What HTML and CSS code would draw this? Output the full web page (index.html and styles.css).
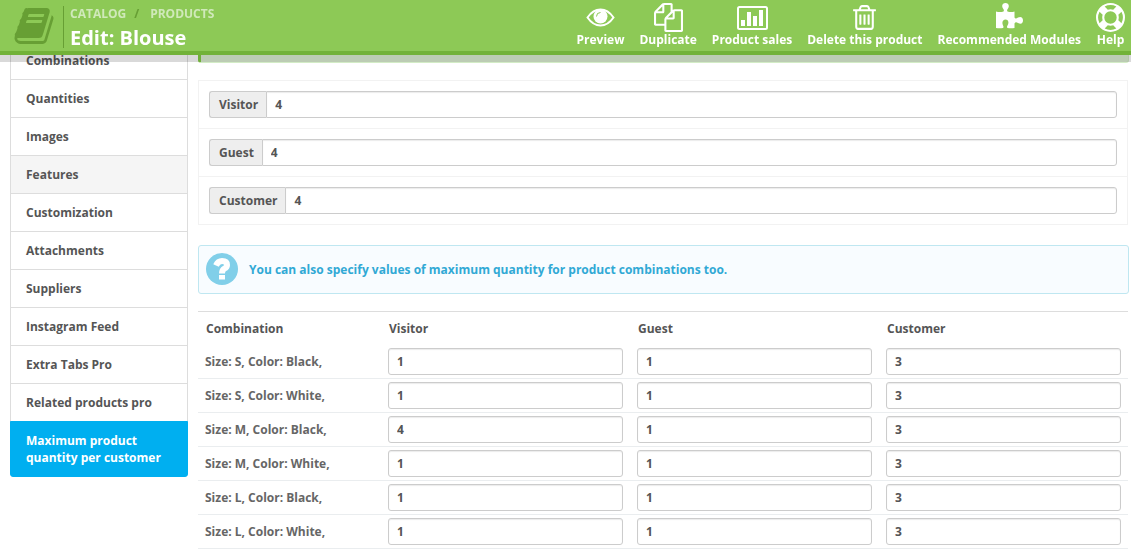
FILE: index.html
```
<!DOCTYPE html>
<html lang="en">
<head>
    <meta charset="UTF-8">
    <meta name="viewport" content="width=device-width, initial-scale=1.0">
    <title>Edit: Blouse</title>
    <link rel="stylesheet" href="styles.css">
</head>
<body>
    <header class="page-head">
        <svg class="page-icon" viewBox="0 0 1792 1792" aria-hidden="true"><path d="M1703 478q40 57 18 129l-275 906q-19 64-76.500 107.500t-122.500 43.500h-923q-77 0-148.500-53.500t-99.500-131.500q-24-67-2-127 0-4 3-27t4-37q1-8-3-21.500t-3-19.500q2-11 8-21t16.500-23.500 16.500-23.500q23-38 45-91.500t30-91.500q3-10 .5-30t-.5-28q3-11 17-28t17-23q21-36 42-92t25-90q1-9-2.500-32t.5-28q4-13 22-30.500t22-22.500q19-26 42.500-84.500t27.500-96.500q1-8-3-25.500t-2-26.500q2-8 9-18t18-23 17-21q8-12 16.500-30.500t15-35 16-36 19.500-32 26.500-23.500 36-11.500 47.500 5.500l-1 3q38-9 51-9h761q74 0 114 56t18 130l-274 906q-36 119-71.500 153.500t-128.500 34.500h-869q-27 0-38 15-11 16-1 43 24 70 144 70h923q29 0 56-15.500t35-41.500l300-987q7-22 5-57 38 15 59 43zm-1064 2q-4 13 2 22.500t20 9.500h608q13 0 25.500-9.500t16.500-22.500l21-64q4-13-2-22.500t-20-9.500h-608q-13 0-25.500 9.500t-16.500 22.500zm-83 256q-4 13 2 22.500t20 9.500h608q13 0 25.500-9.500t16.500-22.500l21-64q4-13-2-22.500t-20-9.500h-608q-13 0-25.500 9.500t-16.500 22.500z"/></svg>
        <div class="page-heading">
            <nav class="breadcrumb" aria-label="Breadcrumb">
                <a href="#">CATALOG</a>
                <span class="separator">/</span>
                <a href="#">PRODUCTS</a>
            </nav>
            <h1>Edit: Blouse</h1>
        </div>
        <nav class="toolbar" aria-label="Actions">
            <a href="#">
                <svg viewBox="0 0 29 29" aria-hidden="true"><path class="line" d="M1.500 14.500Q7 6.500 14.500 6.500T27.500 14.500Q22 22.500 14.500 22.500T1.500 14.500z"/><circle cx="14.500" cy="13.500" r="7"/><path class="cut" d="M10.500 13.500q0-4 4-4"/></svg>
                <span>Preview</span>
            </a>
            <a href="#">
                <svg viewBox="0 0 1792 1792" aria-hidden="true"><path d="M1696 384q40 0 68 28t28 68v1216q0 40-28 68t-68 28h-960q-40 0-68-28t-28-68v-288h-544q-40 0-68-28t-28-68v-672q0-40 20-88t48-76l408-408q28-28 76-48t88-20h416q40 0 68 28t28 68v328q68-40 128-40h416zm-544 213l-299 299h299v-299zm-640-384l-299 299h299v-299zm196 647l316-316v-416h-384v416q0 40-28 68t-68 28h-416v640h512v-256q0-40 20-88t48-76zm956 804v-1152h-384v416q0 40-28 68t-68 28h-416v640h896z"/></svg>
                <span>Duplicate</span>
            </a>
            <a href="#">
                <svg viewBox="0 0 31 29" aria-hidden="true"><rect class="line" x="1" y="4" width="29" height="22" rx="1.500"/><path d="M4 17h4v6H4zM10 9h4v14h-4zM16 13h4v10h-4zM22 7h4v16h-4z"/></svg>
                <span>Product sales</span>
            </a>
            <a href="#">
                <svg viewBox="0 0 1792 1792" aria-hidden="true"><path d="M704 736v576q0 14-9 23t-23 9h-64q-14 0-23-9t-9-23v-576q0-14 9-23t23-9h64q14 0 23 9t9 23zm256 0v576q0 14-9 23t-23 9h-64q-14 0-23-9t-9-23v-576q0-14 9-23t23-9h64q14 0 23 9t9 23zm256 0v576q0 14-9 23t-23 9h-64q-14 0-23-9t-9-23v-576q0-14 9-23t23-9h64q14 0 23 9t9 23zm128 724v-948h-896v948q0 22 7 40.500t14.500 27 10.500 8.500h832q3 0 10.500-8.500t14.500-27 7-40.500zm-672-1076h448l-48-117q-7-9-17-11h-317q-10 2-17 11zm928 32v64q0 14-9 23t-23 9h-96v948q0 83-47 143.500t-113 60.500h-832q-66 0-113-58.500t-47-141.500v-952h-96q-14 0-23-9t-9-23v-64q0-14 9-23t23-9h309l70-167q15-37 54-63t79-26h320q40 0 79 26t54 63l70 167h309q14 0 23 9t9 23z"/></svg>
                <span>Delete this product</span>
            </a>
            <a href="#">
                <svg viewBox="0 0 29 29" aria-hidden="true"><path d="M1 8.500Q5 9.500 8.500 8.500Q9.500 7.500 8 5.500C6 2 8 0 10.500 0S15 2 13 5.500Q11.500 7.500 12.500 8.500Q16 9.500 19.500 8.500V14.500Q20.500 16.500 23 14.500C26 13 28 14.500 28 17.500S26 21.500 23 20Q20.500 18.500 19.500 20.500V25Q16 25.500 12.500 25Q11.500 24 12.500 22.500C14.500 19 13 16.500 10.500 16.500S6.500 19 8 22.500Q9 24 8 25Q4.500 25.500 1 25z"/></svg>
                <span>Recommended Modules</span>
            </a>
            <a href="#">
                <svg viewBox="0 0 1792 1792" aria-hidden="true"><path fill-rule="evenodd" d="M896 0q182 0 348 71t286 191 191 286 71 348-71 348-191 286-286 191-348 71-348-71-286-191-191-286-71-348 71-348 191-286 286-191 348-71zm0 128q-190 0-361 90l194 194q82-28 167-28t167 28l194-194q-171-90-361-90zm-678 1129l194-194q-28-82-28-167t28-167l-194-194q-90 171-90 361t90 361zm678 407q190 0 361-90l-194-194q-82 28-167 28t-167-28l-194 194q171 90 361 90zm0-384q159 0 271.500-112.500t112.500-271.500-112.500-271.500-271.500-112.500-271.500 112.500-112.500 271.500 112.500 271.500 271.500 112.500zm484-217l194 194q90-171 90-361t-90-361l-194 194q28 82 28 167t-28 167z"/></svg>
                <span>Help</span>
            </a>
        </nav>
    </header>

    <div class="layout">
        <nav class="tabs" aria-label="Product tabs">
            <a href="#">Combinations</a>
            <a href="#">Quantities</a>
            <a href="#">Images</a>
            <a href="#" class="hover">Features</a>
            <a href="#">Customization</a>
            <a href="#">Attachments</a>
            <a href="#">Suppliers</a>
            <a href="#">Instagram Feed</a>
            <a href="#">Extra Tabs Pro</a>
            <a href="#">Related products pro</a>
            <a href="#" class="active">Maximum product quantity per customer</a>
        </nav>

        <main class="content">
            <div class="alert-success"></div>

            <div class="groups">
                <div class="group-row">
                    <label for="visitor">Visitor</label>
                    <input type="text" id="visitor" value="4">
                </div>
                <div class="group-row">
                    <label for="guest">Guest</label>
                    <input type="text" id="guest" value="4">
                </div>
                <div class="group-row">
                    <label for="customer">Customer</label>
                    <input type="text" id="customer" value="4">
                </div>
            </div>

            <div class="alert-info">
                <svg viewBox="0 0 32 32" aria-hidden="true"><circle cx="16" cy="16" r="16"/><path class="hook" d="M10 12.500Q12 8 16 8Q21 8 21 12Q21 14.500 18.500 15.500Q16 17 16 20.500"/><path class="dot" d="M13 22h6v4.500h-6z"/></svg>
                <p>You can also specify values of maximum quantity for product combinations too.</p>
            </div>

            <table class="combinations">
                <thead>
                    <tr>
                        <th scope="col" class="name">Combination</th>
                        <th scope="col">Visitor</th>
                        <th scope="col">Guest</th>
                        <th scope="col">Customer</th>
                    </tr>
                </thead>
                <tbody>
                    <tr>
                        <td>Size: S, Color: Black,</td>
                        <td><input type="text" aria-label="Visitor, S Black" value="1"></td>
                        <td><input type="text" aria-label="Guest, S Black" value="1"></td>
                        <td><input type="text" aria-label="Customer, S Black" value="3"></td>
                    </tr>
                    <tr>
                        <td>Size: S, Color: White,</td>
                        <td><input type="text" aria-label="Visitor, S White" value="1"></td>
                        <td><input type="text" aria-label="Guest, S White" value="1"></td>
                        <td><input type="text" aria-label="Customer, S White" value="3"></td>
                    </tr>
                    <tr>
                        <td>Size: M, Color: Black,</td>
                        <td><input type="text" aria-label="Visitor, M Black" value="4"></td>
                        <td><input type="text" aria-label="Guest, M Black" value="1"></td>
                        <td><input type="text" aria-label="Customer, M Black" value="3"></td>
                    </tr>
                    <tr>
                        <td>Size: M, Color: White,</td>
                        <td><input type="text" aria-label="Visitor, M White" value="1"></td>
                        <td><input type="text" aria-label="Guest, M White" value="1"></td>
                        <td><input type="text" aria-label="Customer, M White" value="3"></td>
                    </tr>
                    <tr>
                        <td>Size: L, Color: Black,</td>
                        <td><input type="text" aria-label="Visitor, L Black" value="1"></td>
                        <td><input type="text" aria-label="Guest, L Black" value="1"></td>
                        <td><input type="text" aria-label="Customer, L Black" value="3"></td>
                    </tr>
                    <tr>
                        <td>Size: L, Color: White,</td>
                        <td><input type="text" aria-label="Visitor, L White" value="1"></td>
                        <td><input type="text" aria-label="Guest, L White" value="1"></td>
                        <td><input type="text" aria-label="Customer, L White" value="3"></td>
                    </tr>
                </tbody>
            </table>
        </main>
    </div>
</body>
</html>
```
FILE: styles.css
```
:root {
    --head-color: #8dc956;
    --head-border: #72b239;
    --head-dark: #679f34;
    --text-color: #555;
    --border-color: #ccc;
    --info-color: #31a9d5;
}

* {
    box-sizing: border-box;
}

body {
    margin: 0;
    font-family: "Open Sans", sans-serif;
    font-size: 12px;
    font-weight: 700;
    line-height: 17px;
    color: var(--text-color);
    background-color: #fff;
}

a {
    color: inherit;
    text-decoration: none;
}

/* Header stays over the scrolled content */
.page-head {
    position: fixed;
    top: 0;
    left: 0;
    right: 0;
    z-index: 10;
    display: flex;
    height: 55px;
    padding: 0 6px 0 13px;
    color: #fff;
    background-color: var(--head-color);
    border-bottom: 4px solid var(--head-border);
    box-shadow: 0 7px 0 rgba(0, 0, 0, 0.15);
}

.page-icon {
    width: 42px;
    height: 42px;
    margin: 5px 8px 0 0;
    fill: var(--head-dark);
}

.page-heading {
    margin: 6px 0 3px;
    padding-left: 6px;
    border-left: 1px solid var(--head-dark);
}

.breadcrumb {
    display: flex;
    gap: 8px;
    line-height: 16px;
    color: #d0e9ba;
}

.breadcrumb .separator {
    padding-right: 3px;
    color: var(--head-dark);
}

h1 {
    margin: 4px 0 0;
    font-size: 20px;
    line-height: 24px;
}

.toolbar {
    display: flex;
    gap: 15px;
    margin-left: auto;
    white-space: nowrap;
}

.toolbar a {
    display: flex;
    flex-direction: column;
    align-items: center;
    padding-top: 3px;
}

.toolbar svg {
    height: 29px;
    margin-bottom: -1px;
    fill: currentColor;
}

.toolbar .line {
    fill: none;
    stroke: currentColor;
    stroke-width: 2;
}

.toolbar .cut {
    fill: none;
    stroke: var(--head-color);
    stroke-width: 1;
}

.layout {
    display: flex;
    gap: 10px;
    padding: 41px 2px 4px 10px;
}

/* Left tabs */
.tabs {
    flex: 0 0 178px;
}

.tabs a {
    display: block;
    margin-bottom: -1px;
    padding: 10px 15px;
    border: 1px solid #ddd;
}

.tabs .hover {
    background-color: #f5f5f5;
}

.tabs .active {
    position: relative;
    color: #fff;
    background-color: #00aff0;
    border-color: #00aff0;
    border-radius: 0 0 3px 3px;
}

.content {
    flex: 1;
    min-width: 0;
}

.alert-success {
    height: 22px;
    margin-bottom: 17px;
    background-color: #ddf0d4;
    border: 1px solid #d3ecc6;
    border-left: 3px solid #85cf45;
    border-radius: 3px;
}

input {
    width: 100%;
    height: 27px;
    padding: 0 8px;
    font: inherit;
    color: var(--text-color);
    background-color: #fff;
    border: 1px solid var(--border-color);
    border-radius: 3px;
    box-shadow: inset 0 1px 1px rgba(0, 0, 0, 0.08);
}

/* Limits per customer group */
.groups {
    margin-right: 1px;
    border: 1px solid #f2f2f2;
}

.group-row {
    display: flex;
    padding: 10px;
}

.group-row + .group-row {
    border-top: 1px solid #f2f2f2;
}

.group-row label {
    padding: 4px 8px 4px 9px;
    background-color: #eee;
    border: 1px solid var(--border-color);
    border-right: 0;
    border-radius: 3px 0 0 3px;
}

.group-row input {
    flex: 1;
    border-radius: 0 3px 3px 0;
}

.alert-info {
    display: flex;
    align-items: center;
    gap: 11px;
    margin: 20px 0 17px;
    padding: 7px 7px 8px;
    color: var(--info-color);
    background-color: #f8fcff;
    border: 1px solid #bfe7f1;
    border-radius: 3px;
}

.alert-info p {
    margin: 0;
}

.alert-info svg {
    width: 32px;
    height: 32px;
    fill: #81cfe9;
}

.alert-info .hook {
    fill: none;
    stroke: #fff;
    stroke-width: 6;
}

.alert-info .dot {
    fill: #fff;
}

/* Limits per combination */
.combinations {
    width: calc(100% - 1px);
    table-layout: fixed;
    border-spacing: 0;
    border-top: 1px solid #ddd;
}

.combinations th {
    height: 33px;
    padding: 0 8px;
    text-align: left;
}

.combinations .name {
    width: 183px;
}

.combinations td {
    padding: 3px 7px;
    color: #666;
    border-bottom: 1px solid #eaedef;
}

.combinations input {
    display: block;
}
```
